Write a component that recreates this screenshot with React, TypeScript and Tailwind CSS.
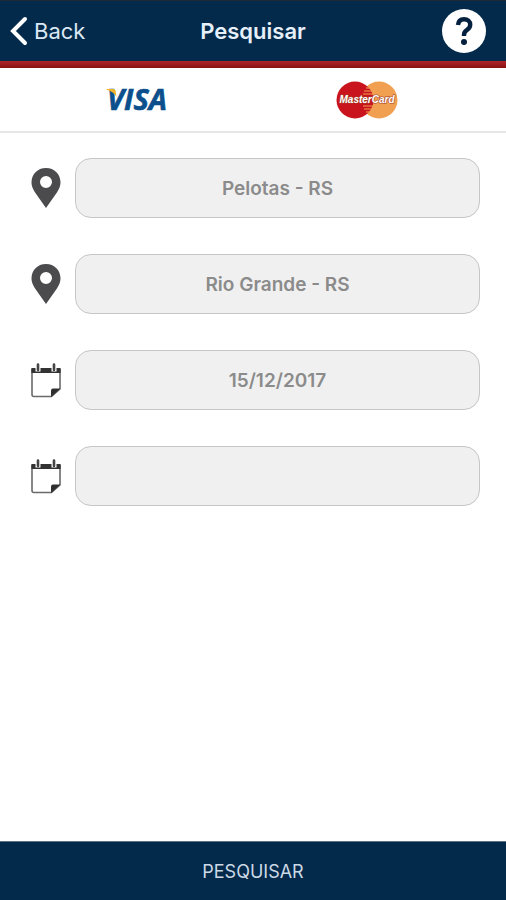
import { useState, type FormEvent } from "react";

type FieldIcon = "pin" | "calendar";

type Field = {
  name: string;
  label: string;
  icon: FieldIcon;
  value: string;
};

const initialFields: Field[] = [
  { name: "origin", label: "Origem", icon: "pin", value: "Pelotas - RS" },
  { name: "destination", label: "Destino", icon: "pin", value: "Rio Grande - RS" },
  { name: "departure", label: "Data de ida", icon: "calendar", value: "15/12/2017" },
  { name: "return", label: "Data de volta", icon: "calendar", value: "" },
];

function ChevronIcon() {
  return (
    <svg viewBox="0 0 18 30" className="h-[30px] w-[18px]" aria-hidden="true">
      <path
        d="M15 3 3 15l12 12"
        fill="none"
        stroke="currentColor"
        strokeWidth="4"
        strokeLinecap="round"
        strokeLinejoin="miter"
      />
    </svg>
  );
}

function HelpIcon() {
  return (
    <svg viewBox="0 0 44 44" className="size-11" aria-hidden="true">
      <circle cx="22" cy="22" r="22" fill="#fff" />
      <path
        d="M16 16c.3-3.600 2.400-5.800 6-5.800s6.200 2.200 6.200 5.500c0 2.500-1.200 3.800-3.200 5.200-2.100 1.400-3 2.400-3 5v1"
        fill="none"
        stroke="#04203f"
        strokeWidth="4.400"
      />
      <circle cx="22" cy="33" r="3" fill="#04203f" />
    </svg>
  );
}

function PinIcon() {
  return (
    <svg viewBox="0 0 30 40" className="h-10 w-[30px]" aria-hidden="true">
      <path
        fill="#4b4b4d"
        fillRule="evenodd"
        d="M15 0C6.500 0 .5 6.300.5 14.500c0 3.400 1.400 6.600 3.400 9.700L15 40l11.100-15.800c2-3.100 3.400-6.300 3.400-9.700C29.500 6.300 23.500 0 15 0Zm0 8a6 6 0 1 1 0 12 6 6 0 0 1 0-12Z"
      />
    </svg>
  );
}

function CalendarIcon() {
  return (
    <svg viewBox="0 0 30 36" className="h-9 w-[30px]" aria-hidden="true">
      <path
        d="M1 7v25.500a2 2 0 0 0 2 2h17.500L29 27V7"
        fill="#fff"
        stroke="#6a6a6a"
        strokeWidth="1.600"
      />
      <path d="M.4 6h29.200v5H.4z" fill="#333" />
      <path d="M20 35v-6.500a2 2 0 0 1 2-2H29.500Z" fill="#2e2e2e" />
      <path d="M4.500 5.500h5v4h-5zM20.500 5.500h5v4h-5z" fill="#fff" />
      <path
        d="M7 2.500v5.500M23 2.500v5.500"
        stroke="#444"
        strokeWidth="2.600"
        strokeLinecap="round"
      />
    </svg>
  );
}

function VisaLogo() {
  return (
    <svg
      viewBox="0 0 80 40"
      className="h-10 w-20 font-['Open_Sans','Liberation_Sans',sans-serif] text-[29px] font-bold italic"
      role="img"
      aria-label="Visa"
    >
      <text
        x="41"
        y="30"
        textAnchor="middle"
        fill="#0b4f8c"
        stroke="#0b4f8c"
        strokeWidth="0.600"
      >
        VISA
      </text>
      <path
        d="M10.500 9h6.500c1.600 0 2.500.8 2.700 2.200l.8 5.800C18 13 15 10.800 10.500 9.800Z"
        fill="#efb42c"
      />
    </svg>
  );
}

function MasterCardLogo() {
  return (
    <svg
      viewBox="0 0 62 38"
      className="h-[38px] w-[62px] font-['Liberation_Sans',sans-serif] text-[10px] font-bold italic"
      role="img"
      aria-label="MasterCard"
    >
      <circle cx="43" cy="19" r="18.500" fill="#f0a050" />
      <circle cx="19" cy="19" r="18.500" fill="#c9141d" />
      <path
        d="M30 7h4M28 10h8M27 13h10M27 25h10M28 28h8M30 31h4"
        stroke="#f0a050"
        strokeWidth="1.200"
      />
      <text
        x="31"
        y="22"
        textAnchor="middle"
        fill="#fff"
        stroke="#a8402a"
        strokeWidth="1.200"
        paintOrder="stroke"
      >
        MasterCard
      </text>
    </svg>
  );
}

export default function App() {
  const [fields, setFields] = useState(initialFields);

  function updateField(name: string, value: string) {
    setFields((current) =>
      current.map((field) => (field.name === name ? { ...field, value } : field)),
    );
  }

  function handleSubmit(event: FormEvent<HTMLFormElement>) {
    event.preventDefault();
  }

  return (
    <div className="flex min-h-screen flex-col bg-white font-['Inter','Liberation_Sans',sans-serif]">
      <header className="border-t border-[#1d2a33] bg-[#032a4a]">
        <div className="grid h-15 grid-cols-[1fr_auto_1fr] items-center px-2.5">
          <button
            type="button"
            className="flex items-center gap-1.5 justify-self-start text-[22px] leading-7 text-[#dbe8f5]"
          >
            <span className="text-white">
              <ChevronIcon />
            </span>
            Back
          </button>
          <h1 className="text-[22px] leading-7 font-semibold text-[#e6f0fa]">Pesquisar</h1>
          <button type="button" aria-label="Ajuda" className="mr-2.5 justify-self-end">
            <HelpIcon />
          </button>
        </div>
        <div className="h-[7px] bg-linear-to-b from-[#ac2428] to-[#8a1014]" />
      </header>

      <section className="grid h-[65px] grid-cols-2 items-center justify-items-center border-b-2 border-[#e6e6e6] pr-6 pl-5">
        <VisaLogo />
        <MasterCardLogo />
      </section>

      <form onSubmit={handleSubmit} className="flex flex-1 flex-col">
        <div className="flex flex-1 flex-col gap-9 pt-[25px] pr-[26px] pl-[31px]">
          {fields.map((field) => (
            <div key={field.name} className="flex items-center gap-3.5">
              <label htmlFor={field.name} aria-label={field.label}>
                {field.icon === "pin" ? <PinIcon /> : <CalendarIcon />}
              </label>
              <input
                id={field.name}
                name={field.name}
                type="text"
                value={field.value}
                onChange={(event) => updateField(field.name, event.target.value)}
                className="h-15 min-w-0 flex-1 rounded-2xl border border-[#c6c6c6] bg-[#f0f0f0] px-4 text-center text-[19px] font-semibold text-[#8b8b8b] outline-none"
              />
            </div>
          ))}
        </div>

        <button
          type="submit"
          className="h-[59px] border-t border-[#5c7488] bg-[#032a4a] pt-0.5 text-lg text-[#ccd9e6]"
        >
          PESQUISAR
        </button>
      </form>
    </div>
  );
}
